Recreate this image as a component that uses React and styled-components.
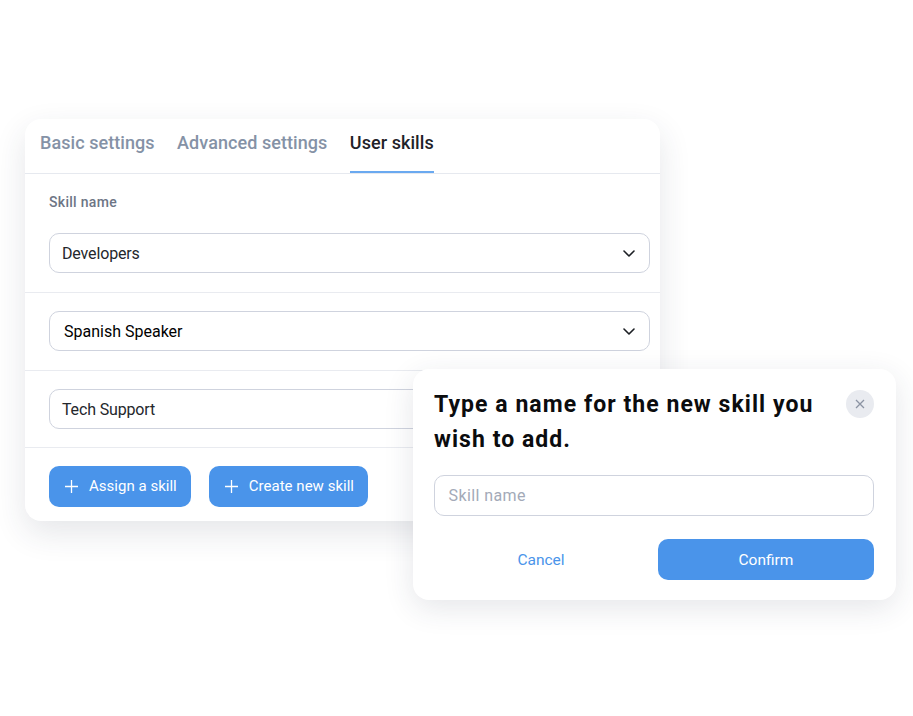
import React from "react";
import styled, { createGlobalStyle } from "styled-components";

const GlobalStyle = createGlobalStyle`
  html, body {
    margin: 0;
    padding: 0;
    background: #fff;
    font-family: Roboto, "Liberation Sans", sans-serif;
  }
`;

const Page = styled.div`
  position: relative;
  width: 913px;
  height: 716px;
  overflow: hidden;
  padding: 119px 0 0 25px;
  box-sizing: border-box;
`;

const Card = styled.div`
  width: 635px;
  height: 402px;
  background: #fff;
  border-radius: 16px;
  box-shadow: 0 12px 32px rgba(40, 50, 70, 0.12);
  display: flex;
  flex-direction: column;
`;

const Tabs = styled.div`
  display: flex;
  gap: 22.5px;
  height: 54px;
  padding-left: 15px;
  border-bottom: 1px solid #e6e9ef;
  box-sizing: content-box;
`;

const Tab = styled.div`
  height: 54px;
  line-height: 48px;
  box-sizing: border-box;
  font-size: 18px;
  font-weight: 500;
  letter-spacing: 0.06px;
  color: ${(p) => (p.$active ? "#1f2329" : "#8592a6")};
  border-bottom: ${(p) => (p.$active ? "2px solid #6aa9f0" : "none")};
`;

const Section = styled.div`
  padding: ${(p) => p.$padding};
  border-bottom: 1px solid #e9ebf0;
`;

const Label = styled.div`
  font-size: 14px;
  font-weight: 500;
  line-height: 20px;
  letter-spacing: 0.3px;
  color: #6d7585;
  margin-bottom: 21px;
`;

const Select = styled.div`
  height: 40px;
  width: 601px;
  box-sizing: border-box;
  border: 1px solid #cfd3de;
  border-radius: 10px;
  display: flex;
  align-items: center;
  justify-content: space-between;
  padding: 0 14px 0 ${(p) => p.$indent || "12px"};
  font-size: 16px;
  letter-spacing: ${(p) => p.$tracking || "-0.15px"};
  color: ${(p) => p.$color || "#24272c"};
`;

const Actions = styled.div`
  display: flex;
  gap: 18px;
  padding: 18px 24px 0;
`;

const AddButton = styled.div`
  height: 41px;
  display: flex;
  align-items: center;
  gap: 11px;
  padding: 0 14px 0 16px;
  background: #4a94ea;
  color: #fff;
  border-radius: 10px;
  font-size: 15px;
  font-weight: 400;
  letter-spacing: 0.02px;
`;

const Dialog = styled.div`
  position: absolute;
  left: 413px;
  top: 369px;
  width: 483px;
  height: 231px;
  box-sizing: border-box;
  background: #fff;
  border-radius: 16px;
  box-shadow: 0 8px 30px rgba(40, 50, 70, 0.12);
  padding: 18px 22px 0 21px;
`;

const DialogHead = styled.div`
  display: flex;
  justify-content: space-between;
  align-items: flex-start;
  margin-bottom: 18px;
`;

const Title = styled.h2`
  margin: 0;
  width: 395px;
  font-size: 23px;
  font-weight: 700;
  line-height: 35px;
  letter-spacing: 1.05px;
  color: #0b0c0e;
`;

const CloseButton = styled.div`
  width: 28px;
  height: 28px;
  margin-top: 3px;
  border-radius: 50%;
  background: #e9ebf0;
  color: #8b93a3;
  display: flex;
  align-items: center;
  justify-content: center;
`;

const Field = styled.div`
  height: 41px;
  box-sizing: border-box;
  border: 1px solid #cfd3de;
  border-radius: 10px;
  display: flex;
  align-items: center;
  padding-left: 13.5px;
  font-size: 16px;
  letter-spacing: 0.4px;
  color: #a3aab8;
`;

const DialogActions = styled.div`
  display: flex;
  align-items: center;
  margin-top: 23px;
`;

const CancelButton = styled.div`
  flex: 1;
  text-align: center;
  font-size: 15.5px;
  color: #4a94ea;
  padding-right: 10px;
`;

const ConfirmButton = styled.div`
  width: 216px;
  height: 41px;
  display: flex;
  align-items: center;
  justify-content: center;
  background: #4a94ea;
  color: #fff;
  border-radius: 10px;
  font-size: 15.5px;
`;

const Chevron = () => (
  <svg width="12" height="7" viewBox="0 0 12 7" fill="none">
    <path d="M1 1l5 5 5-5" stroke="#1c1f24" strokeWidth="1.6" strokeLinecap="round" strokeLinejoin="round" />
  </svg>
);

const Plus = () => (
  <svg width="13" height="13" viewBox="0 0 13 13" fill="none">
    <path d="M6.5 0v13M0 6.5h13" stroke="#fff" strokeWidth="1.3" />
  </svg>
);

const Cross = () => (
  <svg width="10" height="10" viewBox="0 0 10 10" fill="none">
    <path d="M1 1l8 8M9 1l-8 8" stroke="currentColor" strokeWidth="1.3" />
  </svg>
);

const App = () => {
  return (
    <Page>
      <GlobalStyle />
      <Card>
        <Tabs>
          <Tab>Basic settings</Tab>
          <Tab>Advanced settings</Tab>
          <Tab $active>User skills</Tab>
        </Tabs>
        <Section $padding="18px 10px 18.5px 24px">
          <Label>Skill name</Label>
          <Select>
            Developers
            <Chevron />
          </Select>
        </Section>
        <Section $padding="18.5px 10px 18.5px 24px">
          <Select $indent="14px" $color="#000" $tracking="0">
            Spanish Speaker
            <Chevron />
          </Select>
        </Section>
        <Section $padding="18.5px 10px 17.5px 24px">
          <Select>Tech Support</Select>
        </Section>
        <Actions>
          <AddButton>
            <Plus />
            Assign a skill
          </AddButton>
          <AddButton>
            <Plus />
            Create new skill
          </AddButton>
        </Actions>
      </Card>
      <Dialog>
        <DialogHead>
          <Title>Type a name for the new skill you wish to add.</Title>
          <CloseButton>
            <Cross />
          </CloseButton>
        </DialogHead>
        <Field>Skill name</Field>
        <DialogActions>
          <CancelButton>Cancel</CancelButton>
          <ConfirmButton>Confirm</ConfirmButton>
        </DialogActions>
      </Dialog>
    </Page>
  );
};

export default App;
